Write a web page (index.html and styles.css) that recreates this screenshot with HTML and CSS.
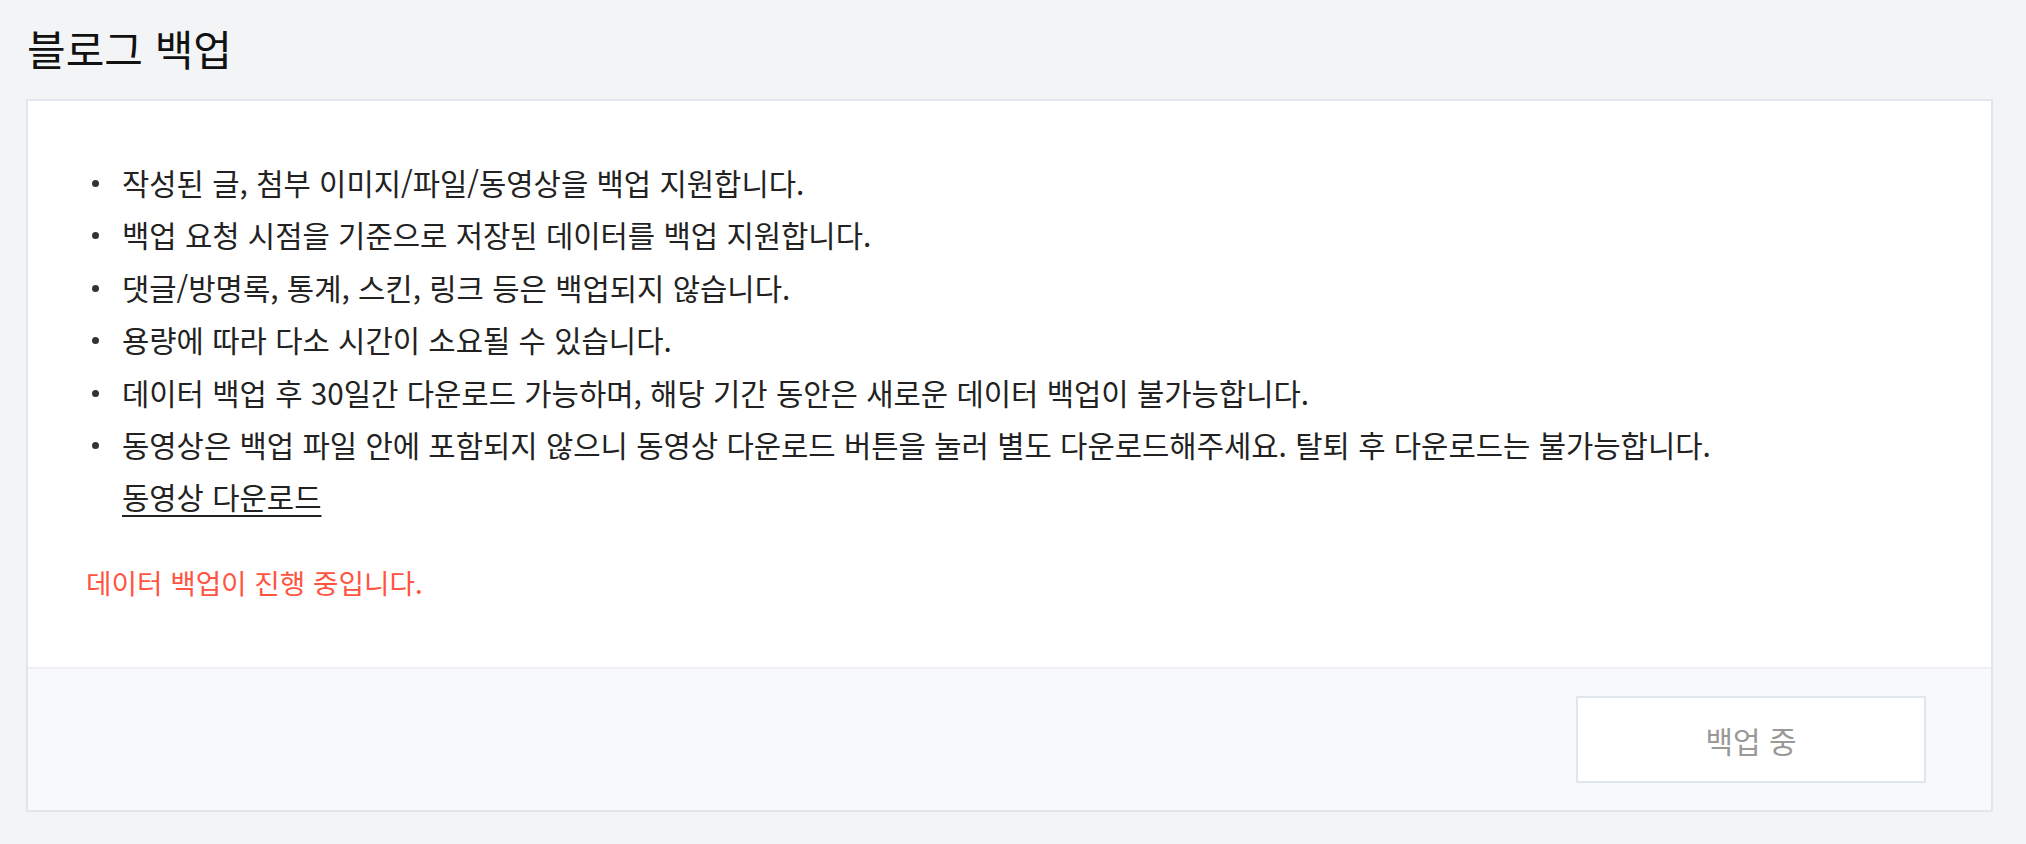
FILE: index.html
```html
<!DOCTYPE html>
<html lang="ko">
<head>
<meta charset="utf-8">
<title>블로그 백업</title>
<link rel="stylesheet" href="styles.css">
</head>
<body>
<h1 class="page-title">블로그 백업</h1>
<section class="card">
  <div class="card-body">
    <ul class="notice-list">
      <li>작성된 글, 첨부 이미지/파일/동영상을 백업 지원합니다.</li>
      <li>백업 요청 시점을 기준으로 저장된 데이터를 백업 지원합니다.</li>
      <li>댓글/방명록, 통계, 스킨, 링크 등은 백업되지 않습니다.</li>
      <li>용량에 따라 다소 시간이 소요될 수 있습니다.</li>
      <li>데이터 백업 후 30일간 다운로드 가능하며, 해당 기간 동안은 새로운 데이터 백업이 불가능합니다.</li>
      <li>동영상은 백업 파일 안에 포함되지 않으니 동영상 다운로드 버튼을 눌러 별도 다운로드해주세요. 탈퇴 후 다운로드는 불가능합니다.<br><a class="video-link" href="#">동영상 다운로드</a></li>
    </ul>
    <p class="status">데이터 백업이 진행 중입니다.</p>
  </div>
  <div class="card-footer">
    <button class="btn-backup" type="button" disabled>백업 중</button>
  </div>
</section>
</body>
</html>
```

FILE: styles.css
```css
html, body {
  margin: 0;
  padding: 0;
}
body {
  background: #f3f4f6;
  font-family: "Noto Sans CJK KR", "Noto Sans", sans-serif;
  color: #222;
}
.page-title {
  margin: 0;
  padding: 18px 0 0 27px;
  height: 81px;
  box-sizing: border-box;
  font-size: 42px;
  font-weight: 400;
  line-height: 60px;
  color: #111;
}
.card {
  margin: 18px 33px 28px 26px;
  border: 2px solid #e1e5ec;
  background: #fff;
}
.card-body {
  padding: 56px 58px 59px 58px;
}
.notice-list {
  list-style: none;
  margin: 0;
  padding: 0;
  font-size: 29.7px;
  line-height: 52.4px;
}
.notice-list li {
  position: relative;
  padding-left: 36px;
}
.notice-list li::before {
  content: "";
  position: absolute;
  left: 6px;
  top: 23px;
  width: 7px;
  height: 7px;
  border-radius: 50%;
  background: #333;
}
.video-link {
  color: #222;
  text-decoration: underline;
  text-decoration-thickness: 2px;
  text-underline-offset: 6px;
}
.status {
  margin: 32px 0 0 0;
  font-size: 27.7px;
  line-height: 52.4px;
  color: #ff5442;
}
.card-footer {
  border-top: 2px solid #eef0f4;
  background: #f8f9fb;
  padding: 27px 65px 27px 0;
  display: flex;
  justify-content: flex-end;
}
.btn-backup {
  width: 350px;
  height: 87px;
  border: 2px solid #e1e5ec;
  background: #fff;
  color: #999;
  font-family: "Noto Sans CJK KR", "Noto Sans", sans-serif;
  font-size: 30px;
  padding: 0;
}
```
